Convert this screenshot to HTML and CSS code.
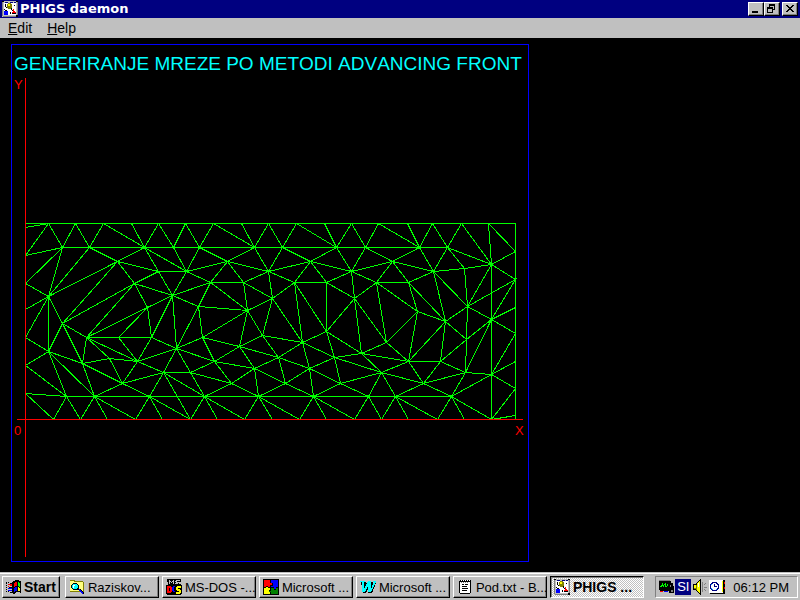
FILE: index.html
```html
<!DOCTYPE html>
<html lang="en">
<head>
  <meta charset="UTF-8">
  <meta name="viewport" content="width=device-width, initial-scale=1.0">
  <title>PHIGS daemon</title>
  <link rel="stylesheet" href="styles.css">
</head>
<body>
  <svg class="sprites" aria-hidden="true">
    <symbol id="icon-phigs" viewBox="0 0 16 16">
      <path fill="#c0c0c0" d="M0 0h16v16H0z"/>
      <path fill="#fff" d="M2 2h12v12H2z"/>
      <path fill="#808080" d="M0 1h1v14H0zM15 1h1v13h-1zM1 15h13v1H1z"/>
      <path fill="#000" d="M0 0h2v1H0zM14 0h2v1h-2zM3 3h1v3H3zM4 6h1v1H4zM2 8h1v1H2zM3 9h2v1H3zM12 4h1v1h-1zM8 7h2v1H8zM9 8h1v1H9zM10 9h1v1h-1zM8 11h1v2H8zM10 12h4v1h-4zM14 14h2v2h-2z"/>
      <path fill="#000080" d="M3 1h3v1H3zM8 1h3v1H8zM12 1h2v1h-2z"/>
      <path fill="#808000" d="M6 2h3v1h1v4H9v1H6V7H5V3h1z"/>
      <path fill="#ff0" d="M6 3h2v2H6z"/>
      <path fill="#00f" d="M2 10h4v4H2z"/>
      <path fill="#f00" d="M11 8h1v2h1v1h1v1h-4v-1h1z"/>
    </symbol>
    <symbol id="icon-windows" viewBox="0 0 16 16">
      <path fill="#000" d="M7 2h2V1h4v1h2v12h-1v-1h-4v1H9v1H7v-1H6V3h1zM0 3h1v2H0zM2 3h1v1H2zM4 4h2v1H4zM0 6h1v1H0zM0 8h1v1H0zM3 8h3v1H3zM0 10h1v1H0zM0 12h1v1H0zM2 12h1v1H2zM4 13h2v1H4z"/>
      <path fill="#f00" d="M8 4h1V3h2v4H9v1H8zM2 5h4v1H2zM2 7h1v1H2zM4 6h2v1H4z"/>
      <path fill="#0f0" d="M12 3h1v1h1v4h-1V7h-1z"/>
      <path fill="#00f" d="M8 9h1V8h2v4H9v1H8zM2 9h4v1H2zM2 11h4v1H2z"/>
      <path fill="#ff0" d="M12 8h1v1h1v3h-2z"/>
    </symbol>
    <symbol id="icon-explorer" viewBox="0 0 16 16">
      <path fill="#808000" d="M1 1h5v1h8v1h1v10H1V2H0z"/>
      <path fill="#ffff80" d="M1 2h4v1h9v9H1z"/>
      <path fill="#000" d="M4 4h4v1h1v1h1v4h2v1h1v1h1v1h1v2h-2v-1h-1v-1h-1v-1h-1v-1H4v-1H3V9H2V6h1V5h1z"/>
      <path fill="#0ff" d="M4 5h4v1h1v3H8v1H4V9H3V6h1z"/>
      <path fill="#fff" d="M4 6h2v1H5v2H4z"/>
      <path fill="#00f" d="M10 10h1v1h1v1h1v1h1v2h-1v-1h-1v-1h-1v-1h-1z"/>
    </symbol>
    <symbol id="icon-msdos" viewBox="0 0 16 16">
      <path fill="#000" d="M1 0h14v3h-2v2h2v1h1v9h-1v1H1v-1H0V6h2z"/>
      <path fill="#c0c0c0" d="M3 1h1v4H3zM4 2h1v1H4zM5 3h1v1H5zM6 2h1v1H6zM7 1h1v4H7zM10 1h4v1h-4zM9 2h2v1H9zM10 3h3v1h-3zM9 4h3v1H9z"/>
      <path fill="#f00" d="M1 7h4v1h1v5H5v1H1zM3 9v3h1V9z"/>
      <path fill="#00f" d="M7 7h2v1H8v4h1v1H7v-1H6V8h1z"/>
      <path fill="#ff0" d="M11 7h4v2h-3v1h2v1h1v3h-1v1h-4v-2h3v-1h-2v-1h-1V8h1z"/>
    </symbol>
    <symbol id="icon-office" viewBox="0 0 16 16">
      <path fill="#000" d="M0 0h16v16H0z"/>
      <path fill="#f00" d="M1 1h6v3h2v2H7v2H5V7H3v1H1z"/>
      <path fill="#00f" d="M8 1h7v7h-2v2h-2V8H8V7h2V4H8z"/>
      <path fill="#ff0" d="M1 9h2V8h2v1h2v2H6v2h1v2H1z"/>
      <path fill="#008000" d="M8 9h3v2h2V9h2v6H8v-2H6v-1h2z"/>
    </symbol>
    <symbol id="icon-word" viewBox="0 0 16 16">
      <path fill="#000" d="M1 3h5v1h1v3l2-4h4v4l1-4h2v1l-4 10H8v-4l-2 4H3z"/>
      <path fill="#0ff" d="M0 2h5v1H4v7l4-8h3v8l3-7h-1V2h3v1l-5 10H8V7l-3 6H2V3H0z"/>
    </symbol>
    <symbol id="icon-notepad" viewBox="0 0 16 16">
      <path fill="#000" d="M3 1h11v13h-1v1H3v-1H2V2h1z"/>
      <path fill="#fff" d="M3 3h10v11H3zM4 1h1v1H4zM6 1h1v1H6zM8 1h1v1H8zM10 1h1v1h-1zM12 1h1v1h-1z"/>
      <path fill="#000" d="M5 5h2v1H5zM8 5h3v1H8zM5 7h5v1H5zM5 9h6v1H5zM5 11h5v1H5z"/>
      <path fill="#808080" d="M4 3h1v1H4zM6 3h1v1H6zM8 3h1v1H8zM10 3h1v1h-1z"/>
    </symbol>
    <symbol id="icon-monitor" viewBox="0 0 16 16">
      <path fill="#000" d="M1 2h12v2h2v3h1v7h-5v-2H2v-1H1z"/>
      <path fill="#808080" d="M1 1h11v1H1zM12 6h1v2h-1zM13 11h2v2h-2z"/>
      <path fill="#0f0" d="M2 7h1V6h1V4h1v2h1v2H5V7H4v1H2zM6 5h1V4h1v3h1v1H7V6H6zM9 5h1v2H9z"/>
      <path fill="#f00" d="M2 12h3v1H2z"/>
      <path fill="#00f" d="M6 12h4v1H6z"/>
    </symbol>
    <symbol id="icon-speaker" viewBox="0 0 16 16">
      <path fill="#000" d="M8 0h1v16H8v-1H7v-1H6v-1H5v-1H4v-1H1V5h3V4h1V3h1V2h1V1h1z"/>
      <path fill="#ff0" d="M7 2h1v12H7v-1H6v-1H5v-2H2V6h3V4h1V3h1z"/>
      <path fill="#808000" d="M4 6h1v5H4zM2 9h2v1H2z"/>
      <path fill="#fff" d="M6 4h1v4H6z"/>
      <path fill="#808080" d="M10 3h1v10h-1zM13 4h1v1h-1zM12 5h1v1h-1zM12 8h3v1h-3zM12 10h1v1h-1zM13 11h1v1h-1z"/>
    </symbol>
    <symbol id="icon-scheduler" viewBox="0 0 16 16">
      <path fill="#fff" d="M0 1h15v13H0z"/>
      <path fill="#000" d="M14 1h2v14H1v-1h13z"/>
      <path fill="#ff0" d="M13 2h1v11h-1z"/>
      <path fill="#f00" d="M15 3h1v2h-1zM15 8h1v2h-1z"/>
      <path fill="#000080" d="M3 3h5v1h1v1h1v5H9v1H8v1H3v-1H2v-1H1V5h1V4h1z"/>
      <path fill="#0080ff" d="M2 5h1v5H2zM3 10h5v1H3z"/>
      <path fill="#fff" d="M4 4h3v1h1v1h1v3H8v1H7v1H4v-1H3V9H2V6h1V5h1z"/>
      <path fill="#000080" d="M5 5h1v2h2v1H5z"/>
    </symbol>
  </svg>

  <header class="titlebar">
    <svg class="icon"><use href="#icon-phigs"/></svg>
    <h1>PHIGS daemon</h1>
    <div class="window-buttons">
      <button type="button" class="raised" aria-label="Minimize">
        <svg viewBox="0 0 12 10"><path d="M2 7h6v2H2z"/></svg>
      </button>
      <button type="button" class="raised" aria-label="Restore">
        <svg viewBox="0 0 12 10"><path d="M3 0h6v6H7v3H1V3h2zM4 2v1h3v2h1V2zM2 5v3h4V5z" fill-rule="evenodd"/></svg>
      </button>
      <button type="button" class="raised close" aria-label="Close">
        <svg viewBox="0 0 12 10"><path d="M2 1h2v1h1v1h2V2h1V1h2v1H9v1H8v1H7v1h1v1h1v1h1v1H8V7H7V6H5v1H4v1H2V7h1V6h1V5h1V4H4V3H3V2H2z"/></svg>
      </button>
    </div>
  </header>

  <nav class="menubar">
    <button type="button"><u>E</u>dit</button>
    <button type="button"><u>H</u>elp</button>
  </nav>

  <main class="workspace">
    <svg class="plot" viewBox="11 44 518 518" role="img" aria-label="Advancing front mesh">
      <g transform="translate(.5 .5)">
        <rect class="frame" x="11" y="44" width="517" height="517"/>
        <g class="mesh">
          <!-- outline and the two inner rows -->
          <path d="M25 223H515V419M62 247H447M66 396H451M491 264V419M48 296V351"/>
          <!-- top strip -->
          <path d="M25 227L48 223L62 247L75 223L89 247L103 223L144 247L131 223M144 247L158 223L173 247L185 223L199 247L213 223L254 247L241 223M254 247L268 223L282 247L296 223L336 247L324 223M336 247L351 223L365 247L378 223L419 247L407 223M419 247L432 223L447 247L461 223L491 264L488 223L515 251L491 264L515 279"/>
          <!-- bottom strip -->
          <path d="M25 393L53 419L66 396L80 419L94 396L107 419M94 396L135 419L149 396L162 419M149 396L190 419L204 396L217 419M204 396L244 419L258 396L272 419M258 396L299 419L313 396L326 419M313 396L354 419L368 396L381 419L395 396L408 419M395 396L437 419L451 396L464 419M451 396L491 419L515 415M163 372L190 419M491 419L515 388"/>
          <!-- left side -->
          <path d="M48 223L25 255L62 247L25 283L48 296L62 247M25 309L48 296L25 337L48 351L25 365L66 396L25 393M89 247L48 296L117 261M48 296L62 323L48 351L82 363M66 396L48 351L94 396L82 363L62 323L86 337L82 363L109 358L86 337L137 361L109 358L122 383L82 363M94 396L122 383L137 361L118 337H86L134 283L62 323L117 261M89 247L117 261L144 247M117 261L158 271M117 261L134 283L158 271M134 283L172 295L147 307L134 283M86 337L147 307L118 337H151L147 307M151 337L137 361L176 348L151 337L172 295L176 348M137 361L163 372L122 383L149 396L163 372L176 348L190 372H163L204 396L190 372L214 361L176 348L202 337L198 306L176 348M172 295L198 306L210 282L172 295L158 271H186L172 295M158 271L144 247L186 271L173 247M199 247L186 271L227 261L199 247M186 271L210 282"/>
          <!-- middle -->
          <path d="M198 306L247 310L202 337L214 361L239 346L202 337M214 361L231 383L190 372M231 383L204 396M210 282L227 261L243 282H210L247 310L243 282L268 271L227 261L254 247L268 271L282 247L310 261L268 271L272 298L243 282M247 310L272 298L262 335L247 310L239 346L262 335L302 342L272 298L294 282L268 271M239 346L278 357L262 335M239 346L254 368L214 361M231 383L254 368L258 396L231 383M254 368L278 357L285 383L254 368M258 396L285 383L313 396L309 368L285 383M278 357L309 368L302 342L278 357M294 282L310 261L326 282H294L302 342L326 331L294 282M326 282V331L354 298L326 282L351 271L310 261L336 247L351 271L354 298L376 282L351 271L365 247L392 261L351 271M302 342L334 357L326 331L361 353L354 298L386 342L361 353L334 357L340 383L309 368L334 357L381 372L361 353L408 361L386 342L376 282M313 396L340 383L368 396L381 372L340 383M381 372L395 396L423 383L381 372L408 361L423 383"/>
          <!-- right side -->
          <path d="M376 282L392 261L408 282H376L417 311L386 342M392 261L419 247L433 271L392 261M408 282L433 271L447 247L464 268L433 271L467 306L464 268L491 264L447 247M417 311L408 282L445 321L433 271M417 311L445 321L467 306L491 264M408 361L417 311M408 361L445 321L440 361H408M445 321L466 339L440 361L465 372L466 339L491 319L465 372L423 383L440 361M467 306L466 339M467 306L491 319L515 279L467 306M515 307L491 319L515 333L491 374L515 361M515 388L491 374L465 372L451 396L491 374M451 396L423 383"/>
        </g>
        <path class="axis" d="M25 77V556M16 419H522"/>
      </g>
      <text class="plot-title" x="14" y="70">GENERIRANJE MREZE PO METODI ADVANCING FRONT</text>
      <text class="axis-label" x="14" y="89">Y</text>
      <text class="axis-label" x="14" y="435">0</text>
      <text class="axis-label" x="515" y="435">X</text>
    </svg>
  </main>

  <footer class="taskbar">
    <button type="button" class="raised start"><svg class="icon"><use href="#icon-windows"/></svg><span>Start</span></button>
    <button type="button" class="raised task"><svg class="icon"><use href="#icon-explorer"/></svg><span>Raziskov...</span></button>
    <button type="button" class="raised task"><svg class="icon"><use href="#icon-msdos"/></svg><span>MS-DOS -...</span></button>
    <button type="button" class="raised task"><svg class="icon"><use href="#icon-office"/></svg><span>Microsoft ...</span></button>
    <button type="button" class="raised task"><svg class="icon"><use href="#icon-word"/></svg><span>Microsoft ...</span></button>
    <button type="button" class="raised task"><svg class="icon"><use href="#icon-notepad"/></svg><span>Pod.txt - B...</span></button>
    <button type="button" class="task active"><svg class="icon"><use href="#icon-phigs"/></svg><span>PHIGS ...</span></button>
    <div class="tray">
      <svg class="icon"><use href="#icon-monitor"/></svg>
      <span class="lang">SI</span>
      <svg class="icon"><use href="#icon-speaker"/></svg>
      <svg class="icon"><use href="#icon-scheduler"/></svg>
      <time>06:12 PM</time>
    </div>
  </footer>
</body>
</html>
```
FILE: styles.css
```css
* {
  box-sizing: border-box;
}
body {
  display: flex;
  flex-direction: column;
  height: 100vh;
  margin: 0;
  overflow: hidden;
  background-color: #000;
  color: #000;
  font-family: "Liberation Sans", Arial, sans-serif;
  font-size: 13px;
}
button {
  margin: 0;
  padding: 0;
  border: none;
  background-color: #c0c0c0;
  color: #000;
  font: inherit;
}
svg {
  shape-rendering: crispEdges;
}
.sprites {
  position: absolute;
  width: 0;
  height: 0;
}
.icon {
  flex: none;
  width: 16px;
  height: 16px;
}
.raised {
  border: 1px solid;
  border-color: #fff #000 #000 #fff;
  box-shadow: inset -1px -1px #808080;
}

/* title bar */
.titlebar {
  display: flex;
  flex: none;
  align-items: center;
  gap: 2px;
  height: 18px;
  padding: 0 2px;
  background-color: #000080;
  color: #fff;
}
.titlebar h1 {
  margin: 0;
  font-family: "DejaVu Sans", sans-serif;
  font-size: 13px;
  line-height: 18px;
}
.window-buttons {
  display: flex;
  margin-left: auto;
}
.window-buttons button {
  display: flex;
  width: 16px;
  height: 14px;
  padding: 1px;
}
.window-buttons svg {
  width: 12px;
  height: 10px;
}
.window-buttons .close {
  margin-left: 2px;
}

/* menu bar */
.menubar {
  display: flex;
  flex: none;
  gap: 15px;
  height: 20px;
  padding: 0 8px;
  background-color: #c0c0c0;
}
.menubar button {
  font-size: 14px;
  line-height: 20px;
}

/* drawing area */
.workspace {
  flex: 1;
  min-height: 0;
  padding: 6px 11px 10px;
}
.plot {
  display: block;
  height: 100%;
  max-width: 100%;
}
.frame, .mesh, .axis {
  fill: none;
  stroke-width: 1px;
}
.frame {
  stroke: #00f;
}
.mesh {
  stroke: #0f0;
}
.axis {
  stroke: #f00;
}
.plot-title {
  fill: #0ff;
  font-size: 19px;
  font-kerning: none;
}
.axis-label {
  fill: #f00;
  font-size: 13px;
}

/* taskbar */
.taskbar {
  display: flex;
  flex: none;
  gap: 3px;
  height: 28px;
  padding: 4px 2px 2px;
  background-color: #c0c0c0;
  box-shadow: inset 0 1px #c0c0c0, inset 0 2px #fff;
}
.start, .task {
  display: flex;
  align-items: center;
  height: 22px;
  padding: 0 3px;
  white-space: nowrap;
  overflow: hidden;
}
.start {
  flex: none;
  gap: 2px;
  margin-right: 2px;
  font-size: 14px;
  font-weight: bold;
}
.task {
  flex: 0 1 94px;
  gap: 3px;
}
.task.active {
  border: 1px solid;
  border-color: #000 #fff #fff #000;
  box-shadow: inset 1px 1px #808080;
  background: repeating-conic-gradient(#fff 0 25%, #c0c0c0 0 50%) 0 0 / 2px 2px;
  font-size: 14px;
  font-weight: bold;
}
.tray {
  display: flex;
  flex: none;
  align-items: center;
  gap: 1px;
  height: 22px;
  margin-left: auto;
  padding: 0 8px 0 2px;
  border: 1px solid;
  border-color: #808080 #fff #fff #808080;
}
.lang {
  width: 16px;
  background-color: #000080;
  color: #fff;
  line-height: 16px;
  text-align: center;
}
.tray time {
  margin-left: 7px;
}
```
